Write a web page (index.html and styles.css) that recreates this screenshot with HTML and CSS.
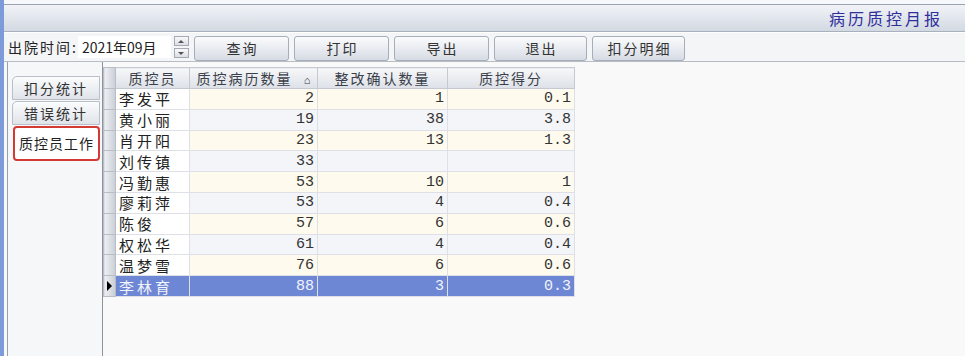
FILE: index.html
```html
<!DOCTYPE html>
<html>
<head>
    <title>病历质控月报</title>
    <link rel="stylesheet" href="styles.css">
</head>
<body>
    <div class="window">
        <div class="side-strip"></div>
        <div class="main">
            <div class="title-bar">
                <span class="title">病历质控月报</span>
            </div>
            <div class="toolbar">
                <span class="label">出院时间:</span>
                <span class="date-box">2021年09月</span>
                <span class="spinner">
                    <span class="spin-btn"><span class="tri up"></span></span>
                    <span class="spin-btn"><span class="tri down"></span></span>
                </span>
                <button class="tool-btn">查询</button>
                <button class="tool-btn">打印</button>
                <button class="tool-btn">导出</button>
                <button class="tool-btn narrow">退出</button>
                <button class="tool-btn narrow">扣分明细</button>
            </div>
            <div class="content">
                <div class="tab-panel">
                    <div class="tab">扣分统计</div>
                    <div class="tab">错误统计</div>
                    <div class="tab active">质控员工作</div>
                </div>
                <div class="grid">
                    <table>
                        <thead>
                            <tr>
                                <th class="sel"></th>
                                <th class="c-name">质控员</th>
                                <th class="c-cnt">质控病历数量 <span class="sort">&#x2302;</span></th>
                                <th class="c-fix">整改确认数量</th>
                                <th class="c-score">质控得分</th>
                            </tr>
                        </thead>
                        <tbody>
                            <tr class="odd"><td class="sel"></td><td class="name">李发平</td><td class="num">2</td><td class="num">1</td><td class="num">0.1</td></tr>
                            <tr class="even"><td class="sel"></td><td class="name">黄小丽</td><td class="num">19</td><td class="num">38</td><td class="num">3.8</td></tr>
                            <tr class="odd"><td class="sel"></td><td class="name">肖开阳</td><td class="num">23</td><td class="num">13</td><td class="num">1.3</td></tr>
                            <tr class="even"><td class="sel"></td><td class="name">刘传镇</td><td class="num">33</td><td class="num"></td><td class="num"></td></tr>
                            <tr class="odd"><td class="sel"></td><td class="name">冯勤惠</td><td class="num">53</td><td class="num">10</td><td class="num">1</td></tr>
                            <tr class="even"><td class="sel"></td><td class="name">廖莉萍</td><td class="num">53</td><td class="num">4</td><td class="num">0.4</td></tr>
                            <tr class="odd"><td class="sel"></td><td class="name">陈俊</td><td class="num">57</td><td class="num">6</td><td class="num">0.6</td></tr>
                            <tr class="even"><td class="sel"></td><td class="name">权松华</td><td class="num">61</td><td class="num">4</td><td class="num">0.4</td></tr>
                            <tr class="odd"><td class="sel"></td><td class="name">温梦雪</td><td class="num">76</td><td class="num">6</td><td class="num">0.6</td></tr>
                            <tr class="current"><td class="sel"><span class="arrow"></span></td><td class="name">李林育</td><td class="num">88</td><td class="num">3</td><td class="num">0.3</td></tr>
                        </tbody>
                    </table>
                </div>
            </div>
        </div>
    </div>
</body>
</html>
```

FILE: styles.css
```css
body {
    margin: 0;
    background-color: #ffffff;
    font-family: "Noto Sans CJK SC", sans-serif;
    font-size: 15px;
    color: #222;
}

.window {
    display: flex;
    height: 356px;
    overflow: hidden;
}

.side-strip {
    width: 4px;
    background-color: #7c9bd8;
    flex-shrink: 0;
}

.main {
    flex: 1;
    display: flex;
    flex-direction: column;
    background-color: #f7f8fa;
}

.title-bar {
    margin-top: 4px;
    height: 26px;
    border-top: 1px solid #9aa3b3;
    border-bottom: 1px solid #a9b1be;
    background: linear-gradient(#f1f3f7, #d3d9e2);
    display: flex;
    justify-content: flex-end;
    align-items: center;
    padding-right: 22px;
}

.title {
    color: #2f2f9c;
    font-size: 16px;
    letter-spacing: 3px;
    line-height: 1;
}

.toolbar {
    height: 28px;
    border-top: 1px solid #ffffff;
    border-bottom: 1px solid #b8bcc4;
    background-color: #f4f5f7;
    display: flex;
    align-items: center;
    padding-left: 4px;
}

.label {
    font-size: 14px;
    letter-spacing: 2px;
    color: #222;
}

.date-box {
    background-color: #ffffff;
    width: 89px;
    height: 22px;
    padding-left: 4px;
    line-height: 22px;
    font-size: 14px;
    color: #222;
}

.spinner {
    display: flex;
    flex-direction: column;
    gap: 2px;
    margin-left: 3px;
    margin-right: 5px;
}

.spin-btn {
    width: 13px;
    height: 8px;
    border: 1px solid #a4a9b2;
    background: linear-gradient(#f8f9fa, #dcdfe4);
    display: flex;
    justify-content: center;
    align-items: center;
}

.tri {
    width: 0;
    height: 0;
    border-left: 3px solid transparent;
    border-right: 3px solid transparent;
}

.tri.up {
    border-bottom: 3px solid #555;
}

.tri.down {
    border-top: 3px solid #555;
}

.tool-btn {
    width: 95px;
    height: 25px;
    margin-top: 2px;
    margin-right: 5px;
    border: 1px solid #a7aebb;
    border-radius: 3px;
    background: linear-gradient(#fafbfc, #e9ecf1 50%, #d6dbe4);
    font-family: "Noto Sans CJK SC", sans-serif;
    font-size: 14px;
    letter-spacing: 2px;
    color: #333;
    padding: 0 0 0 2px;
}

.tool-btn.narrow {
    width: 93px;
}

.content {
    flex: 1;
    display: flex;
}

.tab-panel {
    width: 90px;
    margin-left: 3px;
    border-left: 1px solid #9aa0aa;
    padding-top: 14px;
    padding-left: 4px;
    background-color: #f6f7f9;
}

.tab {
    width: 86px;
    height: 22px;
    line-height: 22px;
    margin-bottom: 1px;
    border: 1px solid #b9bec7;
    border-radius: 5px 0 0 0;
    background: linear-gradient(#fbfcfd, #dfe3e9);
    text-align: center;
    font-size: 14px;
    letter-spacing: 2px;
    color: #333;
}

.tab.active {
    height: 31px;
    line-height: 31px;
    margin-left: 1px;
    width: 83px;
    border: 2px solid #d33a35;
    border-radius: 4px;
    background: #ffffff;
    letter-spacing: 1px;
    color: #222;
}

.grid {
    flex: 1;
    border-left: 1px solid #8d939d;
    background-color: #f9f9fa;
    padding-top: 5px;
}

table {
    border-collapse: collapse;
    table-layout: fixed;
}

th {
    height: 20px;
    padding: 0;
    border: 1px solid #c4c9d2;
    background: linear-gradient(#f6f7f9, #dde1e7);
    font-weight: normal;
    font-size: 14px;
    letter-spacing: 2px;
    color: #3a3f4a;
    text-align: center;
}

th.sel, td.sel {
    width: 11px;
    padding: 0;
    border: 1px solid #b9bec6;
    background: linear-gradient(90deg, #eef0f3, #c9ced6);
}

th.c-name { width: 73px; }
th.c-cnt { width: 127px; }
th.c-fix { width: 129px; }
th.c-score { width: 126px; }

.sort {
    font-size: 11px;
    letter-spacing: 0;
    margin-left: 6px;
}

td {
    height: 19.8px;
    padding: 0 3px;
    border: 1px solid #dde0e6;
    line-height: 19px;
    white-space: nowrap;
}

td.name {
    background-color: #ffffff;
    letter-spacing: 3px;
    font-size: 15px;
}

td.num {
    text-align: right;
    font-family: "Liberation Mono", monospace;
    font-size: 15px;
    color: #333;
}

tr.odd td.num {
    background-color: #fefbee;
}

tr.even td.num {
    background-color: #f4f5f9;
}

tr.current td {
    background-color: #6e87d5;
    color: #f2f4fb;
}

tr.current td.sel {
    background: linear-gradient(90deg, #eef0f3, #c9ced6);
}

.arrow {
    display: block;
    width: 0;
    height: 0;
    margin-left: 3px;
    border-top: 5px solid transparent;
    border-bottom: 5px solid transparent;
    border-left: 5px solid #000;
}
```
